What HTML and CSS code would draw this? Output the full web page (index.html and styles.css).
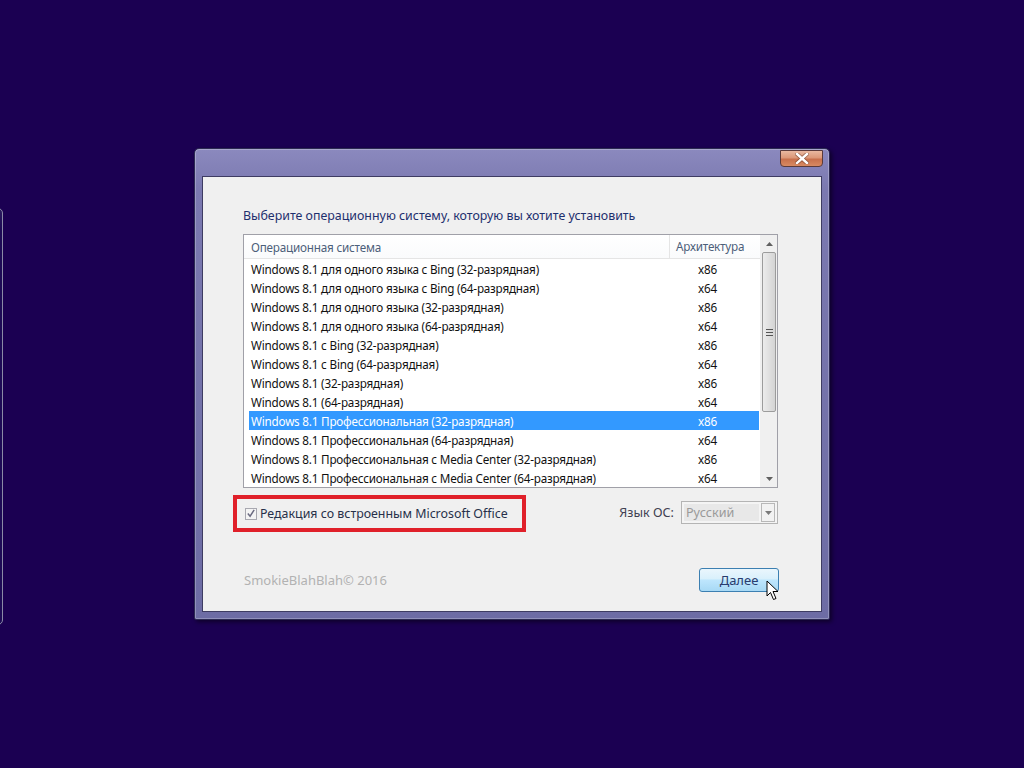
FILE: index.html
```html
<!DOCTYPE html>
<html lang="ru">
<head>
    <meta charset="utf-8">
    <title>Windows Setup</title>
    <link rel="stylesheet" href="styles.css">
</head>
<body>
    <div class="side-window"></div>

    <div class="dialog">
        <div class="titlebar">
            <button class="close-btn" type="button">
                <svg width="14" height="11" viewBox="0 0 14 11"><path d="M2 1 L12 10 M12 1 L2 10" stroke="#5a2a1a" stroke-width="4" stroke-linecap="square" opacity="0.5"/><path d="M2 1 L12 10 M12 1 L2 10" stroke="#fff" stroke-width="2.4" stroke-linecap="square"/></svg>
            </button>
        </div>
        <div class="client">
            <p class="prompt">Выберите операционную систему, которую вы хотите установить</p>

            <div class="listbox">
                <div class="list-main">
                    <div class="list-head">
                        <span class="col-name">Операционная система</span>
                        <span class="col-arch">Архитектура</span>
                    </div>
                    <div class="rows" id="rows"></div>
                </div>
                <div class="scrollbar">
                    <div class="sb-arrow"><svg width="7" height="4" viewBox="0 0 7 4"><path d="M0 4 L3.5 0 L7 4 Z" fill="#606060"/></svg></div>
                    <div class="sb-track">
                        <div class="sb-thumb">
                            <span class="grip"></span>
                        </div>
                    </div>
                    <div class="sb-arrow"><svg width="7" height="4" viewBox="0 0 7 4"><path d="M0 0 L3.5 4 L7 0 Z" fill="#606060"/></svg></div>
                </div>
            </div>

            <div class="options">
                <label class="office-check">
                    <span class="checkbox"><svg width="11" height="11" viewBox="0 0 11 11"><path d="M2 5.5 L4.5 8.5 L9 1.5" stroke="#6a6a80" stroke-width="1.6" fill="none"/></svg></span>
                    Редакция со встроенным Microsoft Office
                </label>
                <div class="lang">
                    <span>Язык ОС:</span>
                    <div class="select">
                        <span class="select-val">Русский</span>
                        <span class="select-btn"><svg width="7" height="4" viewBox="0 0 7 4"><path d="M0 0 L3.5 4 L7 0 Z" fill="#7a7a7a"/></svg></span>
                    </div>
                </div>
            </div>

            <div class="footer">
                <span class="copyright">SmokieBlahBlah© 2016</span>
                <button class="next-btn" type="button">Далее</button>
            </div>
        </div>
    </div>

    <svg class="cursor" width="14" height="22" viewBox="0 0 14 22">
        <path d="M1 1 L1 16 L4.5 12.5 L7.5 19.5 L10 18.5 L7 11.5 L12 11.5 Z" fill="#fff" stroke="#000" stroke-width="1"/>
    </svg>

    <script>
        const systems = [
            ['Windows 8.1 для одного языка с Bing (32-разрядная)', 'x86'],
            ['Windows 8.1 для одного языка с Bing (64-разрядная)', 'x64'],
            ['Windows 8.1 для одного языка (32-разрядная)', 'x86'],
            ['Windows 8.1 для одного языка (64-разрядная)', 'x64'],
            ['Windows 8.1 с Bing (32-разрядная)', 'x86'],
            ['Windows 8.1 с Bing (64-разрядная)', 'x64'],
            ['Windows 8.1 (32-разрядная)', 'x86'],
            ['Windows 8.1 (64-разрядная)', 'x64'],
            ['Windows 8.1 Профессиональная (32-разрядная)', 'x86'],
            ['Windows 8.1 Профессиональная (64-разрядная)', 'x64'],
            ['Windows 8.1 Профессиональная с Media Center (32-разрядная)', 'x86'],
            ['Windows 8.1 Профессиональная с Media Center (64-разрядная)', 'x64']
        ];
        const rows = document.getElementById('rows');
        systems.forEach((item, i) => {
            const row = document.createElement('div');
            row.className = 'row' + (i === 8 ? ' selected' : '');
            row.innerHTML = '<span class="col-name">' + item[0] + '</span><span class="col-arch">' + item[1] + '</span>';
            rows.appendChild(row);
        });
    </script>
</body>
</html>
```

FILE: styles.css
```css
* {
    margin: 0;
    padding: 0;
    box-sizing: border-box;
}
body {
    width: 1024px;
    height: 768px;
    overflow: hidden;
    background: #1b0052;
    font-family: 'Noto Sans', 'Open Sans', sans-serif;
    font-size: 12px;
    position: relative;
}
.side-window {
    position: absolute;
    left: -8px;
    top: 208px;
    width: 11px;
    height: 417px;
    border: 1px solid #8a8aa6;
    border-radius: 0 5px 5px 0;
    background: linear-gradient(to bottom, #2a1a5e 0, #1d0a55 20px);
}
.dialog {
    position: absolute;
    left: 194px;
    top: 148px;
    width: 636px;
    height: 472px;
    border: 1px solid #2c2a52;
    border-radius: 5px 5px 2px 2px;
    background: linear-gradient(to bottom, #8b89be 0, #7b79b0 40px, #6d6ca4 100%);
    box-shadow: 2px 2px 4px rgba(0, 0, 0, 0.5), inset 0 0 0 1px rgba(255, 255, 255, 0.25);
    padding: 0 7px 7px 7px;
    display: flex;
    flex-direction: column;
}
.titlebar {
    height: 27px;
    display: flex;
    justify-content: flex-end;
    align-items: flex-start;
}
.close-btn {
    width: 43px;
    height: 17px;
    margin-top: 1px;
    margin-right: -1px;
    border: 1px solid #5a3a3a;
    border-radius: 0 0 4px 4px;
    background: linear-gradient(to bottom, #e9b8a0 0, #dc9878 45%, #c8704c 55%, #d88a62 100%);
    display: flex;
    align-items: center;
    justify-content: center;
}
.client {
    flex: 1;
    background: #f0f0f0;
    border: 1px solid #3e3c62;
    padding: 31px 43px 0 40px;
    display: flex;
    flex-direction: column;
}
.prompt {
    color: #1e2f6e;
    font-size: 12.4px;
    line-height: 16px;
    margin-bottom: 10px;
}
.listbox {
    height: 254px;
    border: 1px solid #a0a0a8;
    background: #fff;
    display: flex;
    overflow: hidden;
}
.list-main {
    flex: 1;
    display: flex;
    flex-direction: column;
    font-size: 11.7px;
    letter-spacing: -0.2px;
}
.list-head {
    height: 24px;
    display: flex;
    align-items: center;
    color: #4c607a;
    background: linear-gradient(to bottom, #fff 0, #fafbfc 100%);
    border-bottom: 1px solid #e5e5e5;
}
.list-head .col-arch {
    border-left: 1px solid #e5e5e5;
    height: 23px;
    line-height: 23px;
    padding-left: 6px;
    text-align: left;
    width: 91px;
}
.col-name {
    flex: 1;
    padding-left: 7px;
}
.col-arch {
    width: 91px;
    text-align: center;
    padding-right: 12px;
}
.row {
    height: 19px;
    display: flex;
    align-items: center;
    color: #111;
    margin: 0 1px 0 5px;
}
.row .col-name {
    padding-left: 2px;
}
.row.selected {
    background: #3399ff;
    color: #fff;
}
.scrollbar {
    width: 17px;
    background: #f0f0f0;
    border-left: 1px solid #f0f0f0;
    display: flex;
    flex-direction: column;
}
.sb-arrow {
    height: 17px;
    display: flex;
    align-items: center;
    justify-content: center;
}
.sb-track {
    flex: 1;
    display: flex;
    flex-direction: column;
}
.sb-thumb {
    height: 160px;
    margin: 0 1px;
    border: 1px solid #9c9c9c;
    border-radius: 2px;
    background: linear-gradient(to right, #ececec 0, #e0e0e0 50%, #d4d4d4 100%);
    display: flex;
    align-items: center;
    justify-content: center;
}
.grip {
    width: 7px;
    height: 7px;
    border-top: 1px solid #555;
    border-bottom: 1px solid #555;
    position: relative;
}
.grip::after {
    content: '';
    position: absolute;
    left: 0;
    right: 0;
    top: 2px;
    border-top: 1px solid #555;
}
.options {
    display: flex;
    align-items: center;
    justify-content: space-between;
    margin-top: 7px;
    margin-left: -10px;
}
.office-check {
    width: 293px;
    height: 37px;
    border: 4px solid #e0202a;
    display: flex;
    align-items: center;
    padding-left: 8px;
    gap: 3px;
    font-size: 12.4px;
    color: #27304a;
}
.checkbox {
    width: 12px;
    height: 12px;
    border: 1px solid #a8a8b0;
    background: #f4f4f4;
    display: flex;
    align-items: center;
    justify-content: center;
}
.lang {
    display: flex;
    align-items: center;
    gap: 7px;
    color: #404050;
    font-size: 12.6px;
    margin-top: -2px;
}
.select {
    width: 97px;
    height: 23px;
    border: 1px solid #b4b4b4;
    background: #f4f4f4;
    display: flex;
    align-items: center;
    padding: 2px;
}
.select-val {
    flex: 1;
    height: 17px;
    line-height: 17px;
    background: #e8e8e8;
    color: #9a9a9a;
    padding-left: 2px;
}
.select-btn {
    width: 14px;
    height: 19px;
    margin-left: 2px;
    border: 1px solid #b8b8b8;
    background: #f2f2f2;
    display: flex;
    align-items: center;
    justify-content: center;
}
.footer {
    display: flex;
    justify-content: space-between;
    align-items: center;
    margin-top: 36px;
}
.copyright {
    color: #b2b2b2;
    font-size: 13px;
    padding-left: 1px;
}
.next-btn {
    width: 80px;
    height: 24px;
    margin-right: -1px;
    border: 1px solid #3c7fb1;
    border-radius: 3px;
    background: linear-gradient(to bottom, #eaf6fd 0, #d9f0fc 45%, #bee6fd 50%, #a7d9f5 100%);
    color: #283c6e;
    font-family: 'Noto Sans', 'Open Sans', sans-serif;
    font-size: 13px;
}
.cursor {
    position: absolute;
    left: 766px;
    top: 580px;
}
```
